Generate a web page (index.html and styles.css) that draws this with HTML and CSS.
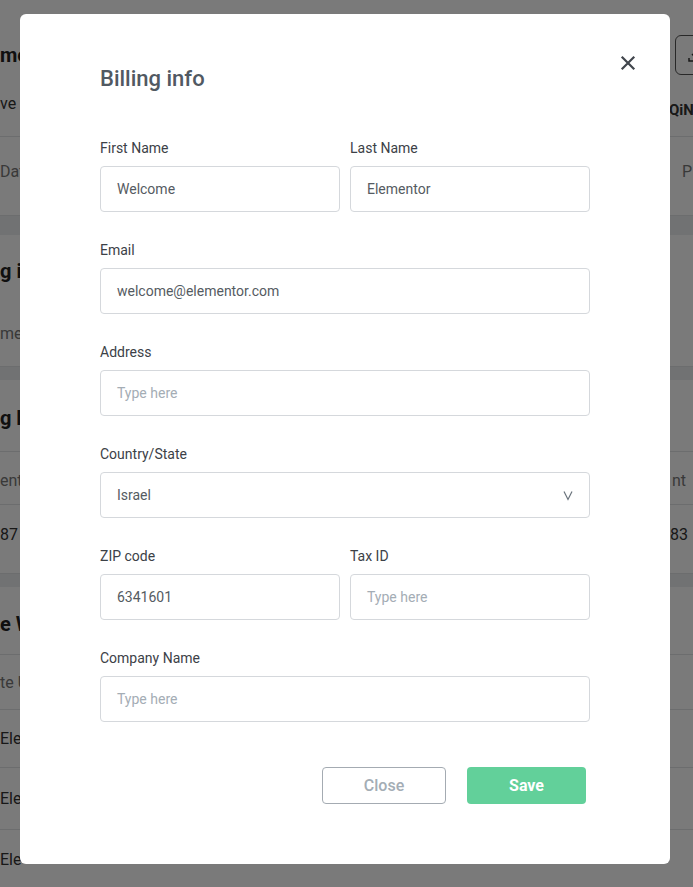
FILE: index.html
```html
<!DOCTYPE html>
<html lang="en">
<head>
<meta charset="utf-8">
<title>Billing info</title>
<link rel="stylesheet" href="styles.css">
</head>
<body>
<div class="page">
  <div class="row row-top">
    <span class="cell-l heading">me</span>
    <span class="dl-btn"><svg width="16" height="16" viewBox="0 0 16 16" fill="none" stroke="#333" stroke-width="1.5"><path d="M8 2v8M5 7l3 3 3-3M2 11v3h12v-3"/></svg></span>
  </div>
  <div class="row row-a">
    <span class="cell-l">ve</span>
    <span class="cell-r bold">QiN</span>
  </div>
  <div class="row row-b line-top">
    <span class="cell-l muted">Dat</span>
    <span class="cell-r muted">P</span>
  </div>
  <div class="band"></div>
  <div class="row row-c">
    <span class="cell-l heading">g in</span>
  </div>
  <div class="row row-d">
    <span class="cell-l muted">me</span>
  </div>
  <div class="band band-s"></div>
  <div class="row row-e">
    <span class="cell-l heading">g h</span>
  </div>
  <div class="row row-f line-top">
    <span class="cell-l muted">ent</span>
    <span class="cell-r muted">nt</span>
  </div>
  <div class="row row-g line-top">
    <span class="cell-l">87</span>
    <span class="cell-r">83</span>
  </div>
  <div class="band band-s"></div>
  <div class="row row-h">
    <span class="cell-l heading">e W</span>
  </div>
  <div class="row row-i line-top">
    <span class="cell-l muted">te U</span>
  </div>
  <div class="row row-j1 line-top">
    <span class="cell-l">Ele</span>
  </div>
  <div class="row row-j2 line-top">
    <span class="cell-l">Ele</span>
  </div>
  <div class="row row-j3 line-top">
    <span class="cell-l">Ele</span>
  </div>
</div>

<div class="overlay"></div>

<div class="modal" role="dialog" aria-label="Billing info">
  <button class="close-x" type="button" aria-label="Close">
    <svg width="16" height="16" viewBox="0 0 16 16" fill="none" stroke="#41464d" stroke-width="2.2" stroke-linecap="square"><path d="M2.5 2.5l11 11M13.5 2.5l-11 11"/></svg>
  </button>
  <h2 class="title">Billing info</h2>
  <form class="form">
    <div class="pair">
      <div class="field">
        <label class="label">First Name</label>
        <div class="input">Welcome</div>
      </div>
      <div class="field">
        <label class="label">Last Name</label>
        <div class="input">Elementor</div>
      </div>
    </div>
    <div class="field">
      <label class="label">Email</label>
      <div class="input">welcome@elementor.com</div>
    </div>
    <div class="field">
      <label class="label">Address</label>
      <div class="input placeholder">Type here</div>
    </div>
    <div class="field">
      <label class="label">Country/State</label>
      <div class="input select">
        <span>Israel</span>
        <svg class="chev" width="10" height="11" viewBox="0 0 10 11" fill="none" stroke="#6a737c" stroke-width="1.2"><path d="M1 1.5l4 8 4-8"/></svg>
      </div>
    </div>
    <div class="pair">
      <div class="field">
        <label class="label">ZIP code</label>
        <div class="input">6341601</div>
      </div>
      <div class="field">
        <label class="label">Tax ID</label>
        <div class="input placeholder">Type here</div>
      </div>
    </div>
    <div class="field">
      <label class="label">Company Name</label>
      <div class="input placeholder">Type here</div>
    </div>
  </form>
  <div class="actions">
    <button class="btn btn-close" type="button">Close</button>
    <button class="btn btn-save" type="button">Save</button>
  </div>
</div>
</body>
</html>
```

FILE: styles.css
```css
* { box-sizing: border-box; }

html, body {
  margin: 0;
  padding: 0;
  height: 100%;
  overflow: hidden;
}

body {
  font-family: Roboto, "Liberation Sans", Arial, sans-serif;
  background: #ffffff;
  color: #2c2f33;
}

/* underlying page (dimmed) */
.page {
  display: flex;
  flex-direction: column;
}

.row {
  display: flex;
  align-items: center;
  justify-content: space-between;
  font-size: 16px;
  color: #333;
}

.line-top { border-top: 1px solid #e2e4e7; }

.cell-r {
  width: 23px;
  white-space: nowrap;
}

.heading { font-size: 20px; font-weight: 700; color: #222; }
.bold { font-weight: 700; font-size: 15px; }
.muted { color: #777; }

.row-top { height: 80px; padding-top: 30px; }
.dl-btn {
  width: 40px;
  height: 40px;
  border: 1px solid #555;
  border-radius: 6px;
  display: flex;
  align-items: center;
  justify-content: center;
  margin-right: -22px;
}
.row-a { height: 56px; padding-bottom: 10px; }
.row-a .cell-r { width: 24px; padding-top: 14px; }
.row-b { height: 79px; padding-bottom: 10px; }
.row-b .cell-r { width: 11px; }
.band { height: 20px; background: #eceef0; border-top: 1px solid #e2e4e7; }
.band-s { height: 14px; }
.row-c { height: 65px; padding-top: 6px; }
.row-d { height: 66px; }
.row-e { height: 71px; padding-top: 4px; }
.row-f { height: 53px; padding-top: 4px; }
.row-f .cell-r { width: 21px; }
.row-g { height: 69px; padding-bottom: 9px; }
.row-h { height: 67px; padding-top: 6px; }
.row-i { height: 55px; }
.row-j1 { height: 58px; }
.row-j2 { height: 62px; }
.row-j3 { height: 60px; }

.overlay {
  position: fixed;
  inset: 0;
  background: rgba(0, 0, 0, 0.52);
}

/* modal */
.modal {
  position: fixed;
  left: 20px;
  top: 14px;
  width: 650px;
  height: 850px;
  background: #ffffff;
  border-radius: 6px;
  padding: 51px 80px 0 80px;
}

.close-x {
  position: absolute;
  top: 41px;
  right: 34px;
  width: 16px;
  height: 16px;
  padding: 0;
  border: 0;
  background: none;
  display: flex;
}

.title {
  margin: 0 0 46px 0;
  font-size: 22px;
  line-height: 28px;
  font-weight: 500;
  color: #515962;
}

.form {
  display: flex;
  flex-direction: column;
  gap: 29px;
}

.pair {
  display: grid;
  grid-template-columns: 1fr 1fr;
  gap: 10px;
}

.field {
  display: flex;
  flex-direction: column;
}

.label {
  font-size: 14px;
  line-height: 18px;
  font-weight: 400;
  color: #3c4147;
  margin-bottom: 9px;
}

.input {
  height: 46px;
  border: 1px solid #d5d8dc;
  border-radius: 4px;
  padding: 0 16px;
  display: flex;
  align-items: center;
  font-size: 14px;
  color: #555b62;
}

.placeholder { color: #a4adb5; }

.select { justify-content: space-between; }

.actions {
  margin-top: 45px;
  display: flex;
  justify-content: flex-end;
  gap: 21px;
  padding-right: 4px;
}

.btn {
  height: 37px;
  border-radius: 4px;
  font-family: Roboto, "Liberation Sans", Arial, sans-serif;
  font-size: 16px;
  font-weight: 500;
  cursor: pointer;
}

.btn-close {
  width: 124px;
  background: #ffffff;
  border: 1px solid #a4abb2;
  color: #a4adb5;
}

.btn-save {
  width: 119px;
  background: #62d09a;
  border: 0;
  color: #ffffff;
  font-weight: 700;
}
```
